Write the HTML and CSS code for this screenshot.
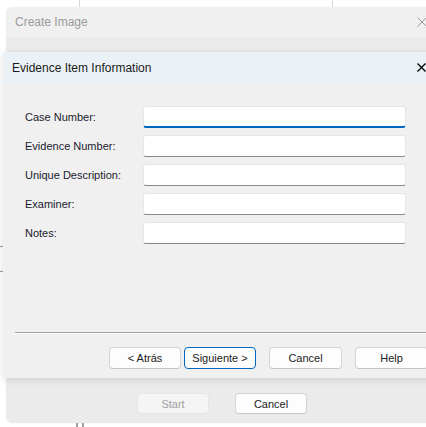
FILE: index.html
```html
<!DOCTYPE html>
<html lang="en">
<head>
  <meta charset="UTF-8">
  <meta name="viewport" content="width=device-width, initial-scale=1.0">
  <title>Create Image</title>
  <link rel="stylesheet" href="styles.css">
</head>
<body>
  <div class="desktop">
    <div class="backdrop-line line-a"></div>
    <div class="backdrop-line line-b"></div>

    <div class="outer">
      <div class="outer-title">
        <span>Create Image</span>
        <svg class="close close-dim" width="10" height="10" viewBox="0 0 10 10">
          <path d="M0.5 0.5 L9.5 9.5 M9.5 0.5 L0.5 9.5" stroke="#9c9c9c" stroke-width="1" fill="none"/>
        </svg>
      </div>
      <div class="outer-band"></div>
      <div class="outer-body">
        <div class="outer-buttons">
          <button class="btn" disabled>Start</button>
          <button class="btn">Cancel</button>
        </div>
      </div>
    </div>
    <div class="side-ticks">
      <div></div>
      <div></div>
    </div>
    <div class="foot-ticks">
      <div></div>
      <div></div>
    </div>

    <div class="wizard">
      <div class="wizard-title">
        <span>Evidence Item Information</span>
        <svg class="close" width="9" height="9" viewBox="0 0 9 9">
          <path d="M0.5 0.5 L8.5 8.5 M8.5 0.5 L0.5 8.5" stroke="#000" stroke-width="1.3" fill="none"/>
        </svg>
      </div>
      <div class="wizard-body">
        <div class="form">
          <label class="row"><span>Case Number:</span><input type="text" class="field focused"></label>
          <label class="row"><span>Evidence Number:</span><input type="text" class="field"></label>
          <label class="row"><span>Unique Description:</span><input type="text" class="field"></label>
          <label class="row"><span>Examiner:</span><input type="text" class="field"></label>
          <label class="row"><span>Notes:</span><input type="text" class="field"></label>
        </div>
        <div class="separator"></div>
        <div class="wizard-buttons">
          <button class="btn">&lt; Atrás</button>
          <button class="btn default">Siguiente &gt;</button>
          <button class="btn gap">Cancel</button>
          <button class="btn gap">Help</button>
        </div>
      </div>
    </div>
  </div>
</body>
</html>
```

FILE: styles.css
```css
* {
  box-sizing: border-box;
}
body {
  margin: 0;
  background-color: #fff;
  font-family: "Liberation Sans", Arial, sans-serif;
  font-size: 11px;
  color: #1b1b1b;
  overflow: hidden;
}
.desktop {
  position: relative;
  width: 426px;
  height: 427px;
  overflow: hidden;
  padding: 7px 0 0 6px;
}
.backdrop-line {
  position: absolute;
  top: 0;
  width: 1px;
  height: 7px;
  background-color: #d6d6d6;
}
.line-a { left: 79px; }
.line-b { left: 332px; }

/* outer Create Image window */
.outer {
  width: 440px;
  height: 416px;
  border-radius: 7px;
  background-color: #ebebeb;
  display: flex;
  flex-direction: column;
  overflow: hidden;
  box-shadow: 0 0 1px rgba(0, 0, 0, 0.15);
}
.outer-title {
  height: 30px;
  display: flex;
  align-items: center;
  justify-content: space-between;
  padding: 0 19px 0 9px;
  background-color: #f0f0f0;
  color: #9a9a9a;
  font-size: 12px;
}
.close {
  display: block;
  flex-shrink: 0;
}
.outer-band {
  height: 15px;
  background-color: #ebebeb;
}
.outer-body {
  flex: 1;
  display: flex;
  flex-direction: column;
  justify-content: flex-end;
  padding-bottom: 9px;
}
.outer-buttons {
  display: flex;
  gap: 26px;
  padding-left: 131px;
}
.outer-buttons .btn {
  height: 21px;
}

.side-ticks div {
  position: absolute;
  left: 0;
  width: 4px;
  height: 1px;
  background-color: #9c9c9c;
}
.side-ticks div:first-child { top: 246px; }
.side-ticks div:last-child { top: 271px; }
.foot-ticks {
  position: absolute;
  left: 76px;
  top: 423px;
  display: flex;
  gap: 4px;
}
.foot-ticks div {
  width: 2px;
  height: 4px;
  background-color: #a0a0a0;
}

/* wizard dialog on top */
.wizard {
  position: absolute;
  left: 3px;
  top: 52px;
  width: 440px;
  height: 326px;
  background-color: #f0f0f0;
  box-shadow: 0 2px 8px rgba(0, 0, 0, 0.12);
  display: flex;
  flex-direction: column;
}
.wizard-title {
  height: 31px;
  display: flex;
  align-items: center;
  justify-content: space-between;
  padding: 0 17px 0 9px;
  background-color: #eaf2f7;
  color: #1a1a1a;
  font-size: 12px;
}
.wizard-body {
  flex: 1;
  padding: 23px 0 0 12px;
  display: flex;
  flex-direction: column;
}
.form {
  display: flex;
  flex-direction: column;
  gap: 7px;
  padding-left: 10px;
  height: 226px;
}
.row {
  display: flex;
  align-items: center;
  height: 22px;
}
.row span {
  width: 118px;
  color: #1a1a2e;
}
.field {
  width: 263px;
  height: 22px;
  margin: 0;
  border: 1px solid #e6e6e6;
  border-bottom: 1px solid #878787;
  border-radius: 3px;
  background-color: #fff;
  outline: none;
}
.field.focused {
  border-bottom: 2px solid #0067c0;
}
.separator {
  height: 2px;
  border-top: 1px solid #a0a0a0;
  border-bottom: 1px solid #fff;
}
.wizard-buttons {
  display: flex;
  gap: 3px;
  margin-top: 13px;
  padding-left: 94px;
}
.btn {
  width: 72px;
  height: 22px;
  padding: 0;
  font-family: "Liberation Sans", Arial, sans-serif;
  font-size: 11px;
  color: #1b1b1b;
  background-color: #fdfdfd;
  border: 1px solid #d3d3d3;
  border-bottom-color: #c4c4c4;
  border-radius: 4px;
}
.btn.default {
  border: 1px solid #0067c0;
}
.btn.gap {
  margin-left: 10px;
  width: 73px;
}
.btn:disabled {
  color: #a0a0a0;
  background-color: #f5f5f5;
  border-color: #e5e5e5;
}
```
